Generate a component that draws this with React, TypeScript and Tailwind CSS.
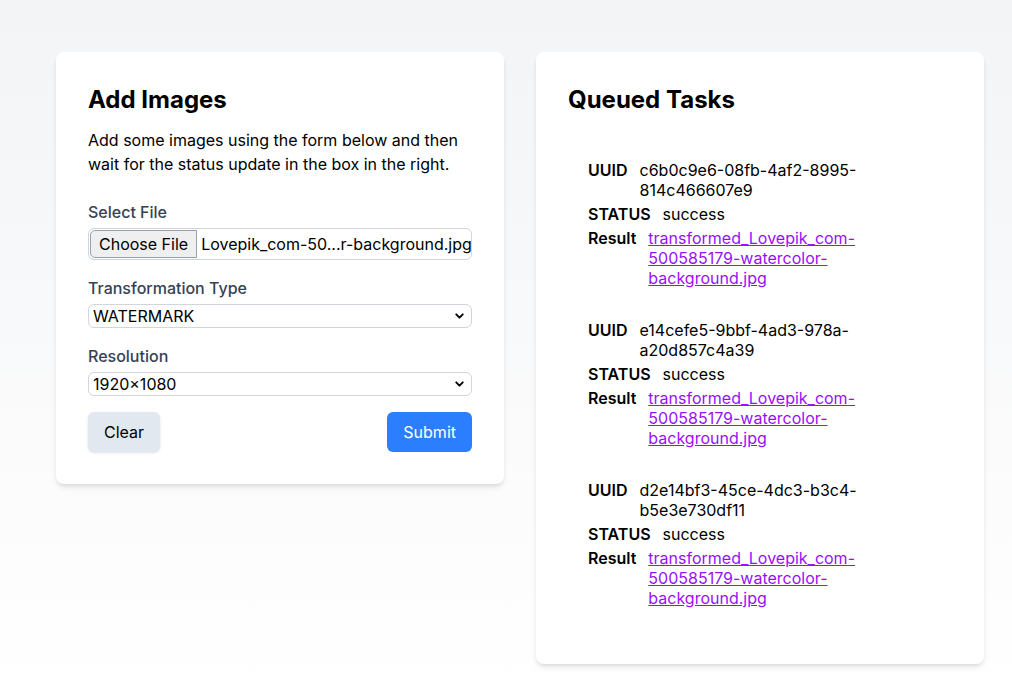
import { ChevronDown } from "lucide-react";

const tasks = [
  { uuid: "c6b0c9e6-08fb-4af2-8995-814c466607e9", status: "success" },
  { uuid: "e14cefe5-9bbf-4ad3-978a-a20d857c4a39", status: "success" },
  { uuid: "d2e14bf3-45ce-4dc3-b3c4-b5e3e730df11", status: "success" },
];

const resultFile = "transformed_Lovepik_com-500585179-watercolor-background.jpg";

function SelectField({ label, value }: { label: string; value: string }) {
  return (
    <div className="mt-4">
      <label className="block text-base font-medium leading-6 text-gray-700">{label}</label>
      <div className="relative mt-1">
        <select
          defaultValue={value}
          className="block h-6 w-full appearance-none rounded-md border border-gray-300 bg-white pl-1 text-base leading-5 text-black"
        >
          <option>{value}</option>
        </select>
        <ChevronDown
          className="pointer-events-none absolute right-1.5 top-1/2 -translate-y-1/2 text-black"
          size={13}
          strokeWidth={3.5}
        />
      </div>
    </div>
  );
}

export default function App() {
  return (
    <div
      className="min-h-screen bg-gradient-to-b from-gray-100 to-white pl-14 pt-[52px] text-black"
      style={{ fontFamily: "Inter, 'Noto Sans', sans-serif" }}
    >
      <div className="flex items-start gap-8">
        {/* form card */}
        <div className="w-[448px] rounded-lg bg-white p-8 shadow-md">
          <h2 className="text-2xl font-bold leading-8">Add Images</h2>
          <p className="mt-3 text-base leading-6">
            Add some images using the form below and then wait for the status update in the box in
            the right.
          </p>

          <div className="mt-6">
            <label className="block text-base font-medium leading-6 text-gray-700">Select File</label>
            <div className="mt-1 flex h-8 items-center overflow-hidden rounded-md border border-gray-300 bg-white">
              <button className="ml-px h-[28px] shrink-0 whitespace-nowrap rounded-l-[5px] border border-gray-400 bg-[#efefef] px-2 text-base leading-5">
                Choose File
              </button>
              <span className="ml-1 whitespace-nowrap text-base leading-5">
                Lovepik_com-50...r-background.jpg
              </span>
            </div>
          </div>

          <SelectField label="Transformation Type" value="WATERMARK" />
          <SelectField label="Resolution" value="1920×1080" />

          <div className="mt-4 flex justify-between">
            <button className="h-10 rounded-md bg-slate-200 px-4 text-base shadow-sm">Clear</button>
            <button className="h-10 rounded-md bg-blue-500 px-4 text-base text-white">Submit</button>
          </div>
        </div>

        {/* queue card */}
        <div className="w-[448px] rounded-lg bg-white p-8 pb-14 shadow-md">
          <h2 className="text-2xl font-bold leading-8">Queued Tasks</h2>
          <ul className="mt-11 space-y-8 pl-5">
            {tasks.map((t) => (
              <li key={t.uuid} className="w-[278px] space-y-1 text-base leading-5">
                <div className="flex gap-3">
                  <span className="font-semibold">UUID</span>
                  <span className="min-w-0">{t.uuid}</span>
                </div>
                <div className="flex gap-3">
                  <span className="font-semibold">STATUS</span>
                  <span>{t.status}</span>
                </div>
                <div className="flex gap-3">
                  <span className="font-semibold">Result</span>
                  <a href="#" className="min-w-0 text-purple-600 underline">
                    {resultFile}
                  </a>
                </div>
              </li>
            ))}
          </ul>
        </div>
      </div>
    </div>
  );
}
